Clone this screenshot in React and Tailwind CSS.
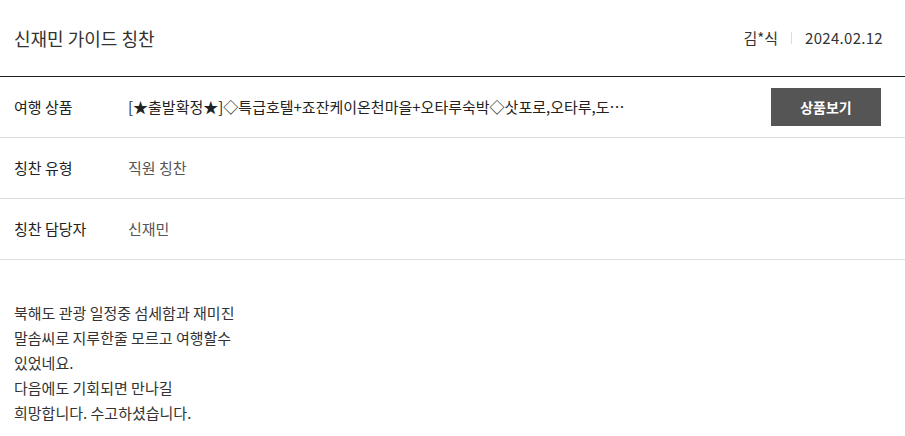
import React from 'react'

const rows = [
  { label: '여행 상품', value: '[★출발확정★]◇특급호텔+죠잔케이온천마을+오타루숙박◇삿포로,오타루,도야,노보리베츠 4일', product: true },
  { label: '칭찬 유형', value: '직원 칭찬' },
  { label: '칭찬 담당자', value: '신재민' },
]

function App() {
  return (
    <div className="w-[905px] h-[436px] bg-white overflow-hidden text-[#333]" style={{ fontFamily: '"Noto Sans CJK KR", "Noto Sans", sans-serif' }}>
      {/* 제목 */}
      <div className="h-[77px] flex items-center justify-between pl-[14px] pr-[22px] border-b border-[#222]">
        <h2 className="text-[18px] text-[#333]">신재민 가이드 칭찬</h2>
        <div className="flex items-center text-[15px] text-[#333]">
          <span>김*식</span>
          <span className="w-px h-[12px] bg-[#ddd] mx-[13px]"></span>
          <span className="tracking-[0.3px]">2024.02.12</span>
        </div>
      </div>

      {/* 정보 */}
      {rows.map((row, i) => (
        <div key={i} className="h-[61px] flex items-center border-b border-[#ddd] pl-[14px] pr-[24px]">
          <div className="w-[114px] shrink-0 text-[15px] text-[#222]">{row.label}</div>
          <div className={`flex-1 min-w-0 text-[15px] ${row.product ? 'text-[#222]' : 'text-[#555]'}`}>
            {row.product ? (
              <div className="flex items-center justify-between">
                <div className="w-[505px] truncate">{row.value}</div>
                <button className="w-[110px] h-[38px] bg-[#555] text-white text-[14px] font-bold">상품보기</button>
              </div>
            ) : (
              row.value
            )}
          </div>
        </div>
      ))}

      {/* 내용 */}
      <div className="pt-[40px] pl-[14px] text-[15px] leading-[25px] text-[#333]">
        <p>북해도 관광 일정중 섬세함과 재미진</p>
        <p>말솜씨로 지루한줄 모르고 여행할수</p>
        <p>있었네요.</p>
        <p>다음에도 기회되면 만나길</p>
        <p>희망합니다. 수고하셨습니다.</p>
      </div>
    </div>
  )
}

export default App
